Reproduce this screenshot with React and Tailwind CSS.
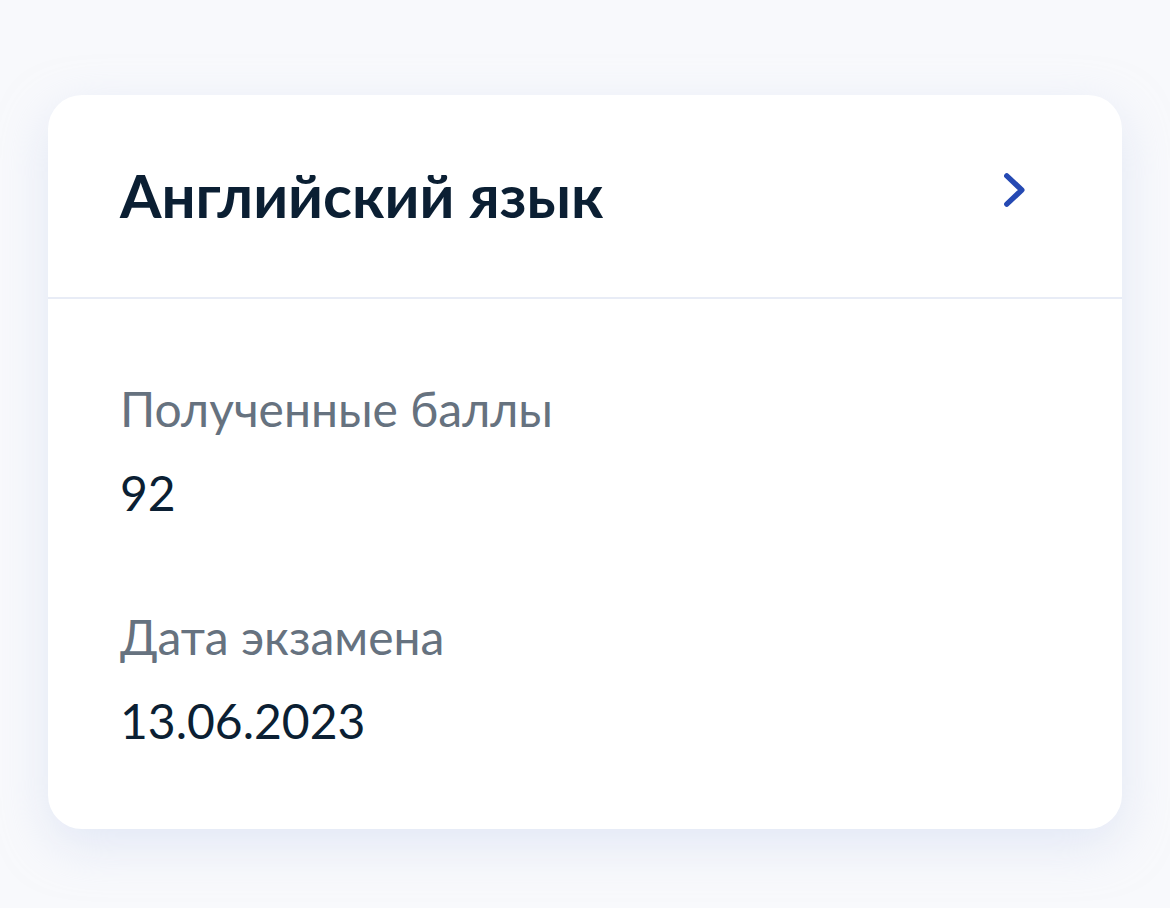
function ChevronRight() {
  return (
    <svg
      width="72"
      height="72"
      viewBox="0 0 24 24"
      fill="none"
      stroke="#2549b3"
      strokeWidth="1.8"
      strokeLinecap="round"
      strokeLinejoin="round"
    >
      <path d="M9.6 7.3L14.6 12L9.6 16.7" />
    </svg>
  );
}

const fields = [
  { label: "Полученные баллы", value: "92" },
  { label: "Дата экзамена", value: "13.06.2023" },
];

export default function App() {
  return (
    <div
      className="min-h-[908px] bg-[#f8f9fc] px-[48px] pt-[95px]"
      style={{ fontFamily: "Lato, 'Noto Sans', sans-serif" }}
    >
      <div className="overflow-hidden rounded-[34px] bg-white shadow-[0_16px_48px_rgba(205,215,240,0.5)]">
        <div className="flex items-center justify-between border-b-2 border-[#e8ecf6] pl-[72px] pr-[72px] pt-[64px] pb-[66px]">
          <h1 className="text-[60px] font-bold leading-[72px] text-[#0b1f33]">
            Английский язык
          </h1>
          <div className="-mt-[10px]">
            <ChevronRight />
          </div>
        </div>
        <div className="flex flex-col gap-[84px] px-[72px] pt-[80px] pb-[78px]">
          {fields.map((f) => (
            <div key={f.label} className="flex flex-col gap-[24px]">
              <span className="text-[48px] leading-[60px] text-[#66727f]">
                {f.label}
              </span>
              <span className="text-[48px] leading-[60px] text-[#0b1f33]">
                {f.value}
              </span>
            </div>
          ))}
        </div>
      </div>
    </div>
  );
}
